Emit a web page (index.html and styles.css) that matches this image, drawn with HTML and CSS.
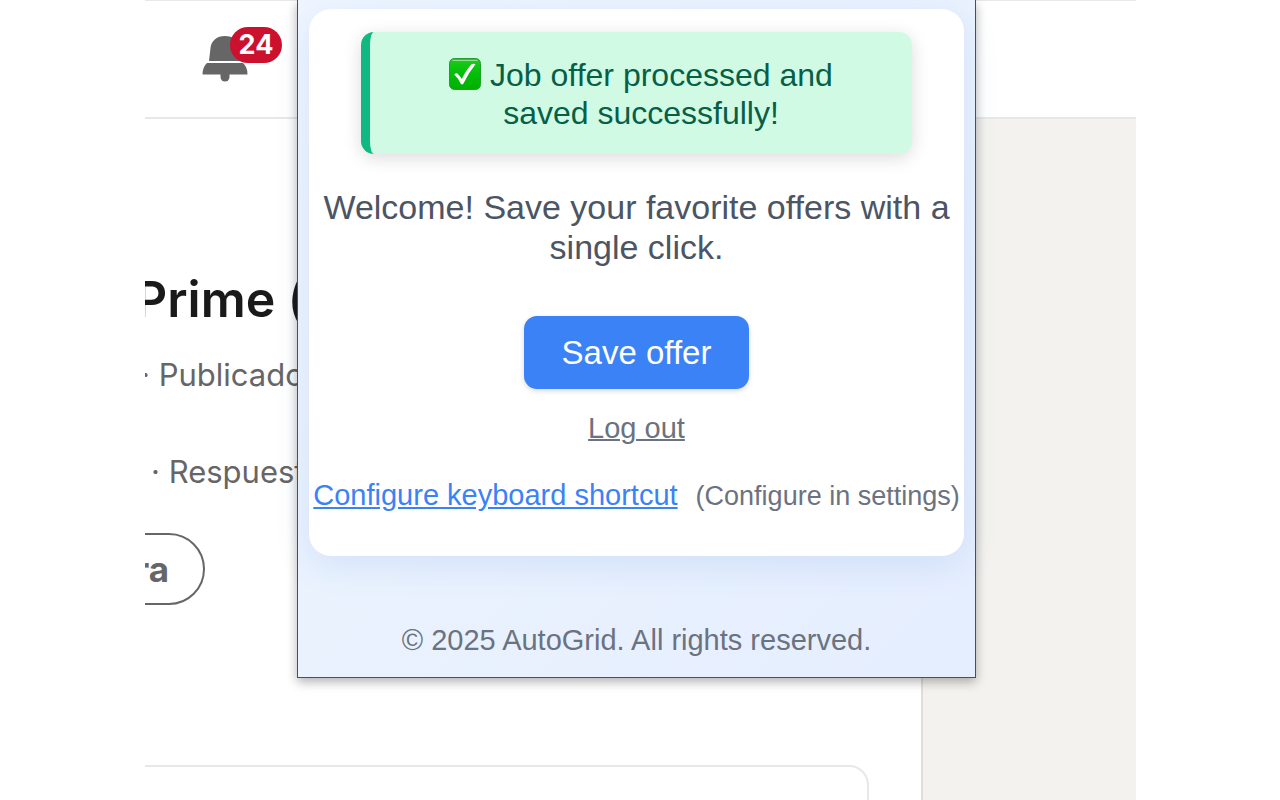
FILE: index.html
```
<!DOCTYPE html>
<html lang="en">
<head>
    <meta charset="UTF-8">
    <meta name="viewport" content="width=device-width, initial-scale=1.0">
    <title>AutoGrid</title>
    <link rel="stylesheet" href="styles.css">
</head>
<body>
    <div class="stage">
        <header class="site-header">
            <a class="notifications" href="#" aria-label="Notifications">
                <svg class="bell" viewBox="0 0 46 46" fill="#666" aria-hidden="true">
                    <path d="M7 25 L8.500 12 C9.300 4.500 15 0 23 0 C31 0 36.500 4.500 37.500 12 L39 25 Z"/>
                    <path d="M5 27 H41 C44 30 45.500 33.500 45.500 38.500 H0.500 C0.500 33.500 2 30 5 27 Z"/>
                    <path d="M18.500 38 H27.500 V41 A4.500 4.500 0 0 1 18.500 41 Z"/>
                </svg>
                <span class="badge">24</span>
            </a>
        </header>

        <div class="site-body">
            <main class="job">
                <h1 class="job-title" lang="es">Prime (</h1>
                <p class="job-meta" lang="es">· Publicado</p>
                <p class="job-meta job-meta-reply" lang="es">· Respuesta</p>
                <button class="job-pill" type="button">ra</button>
                <div class="job-card"></div>
            </main>
            <aside class="sidebar"></aside>
        </div>

        <section class="popup">
            <div class="card">
                <div class="alert" role="status">
                    <svg class="check" viewBox="0 0 32 32" aria-hidden="true">
                        <defs>
                            <linearGradient id="check-bg" x1="0" y1="0" x2="0" y2="1">
                                <stop offset="0" stop-color="#3fb93f"/>
                                <stop offset="0.150" stop-color="#14c814"/>
                                <stop offset="0.550" stop-color="#00bd08"/>
                                <stop offset="1" stop-color="#00b000"/>
                            </linearGradient>
                        </defs>
                        <rect x="0.500" y="0.500" width="31" height="31" rx="5" fill="url(#check-bg)" stroke="#22a02c" stroke-width="1"/>
                        <path d="M4 2.500 H28" stroke="#8fe08f" stroke-width="1.200" stroke-linecap="round"/>
                        <path d="M5.300 16.500 Q7 14.500 8.500 15.500 Q10.500 17.500 12.800 21 Q17.500 11.500 22.300 6.500 Q24.500 5 26.500 6.200 Q19.500 14.500 14.500 25.500 Q13.300 27.300 11.800 25.800 Q9 20 5.300 16.500 Z" fill="#fff"/>
                    </svg>
                    Job offer processed and saved successfully!
                </div>
                <p class="message">Welcome! Save your favorite offers with a single click.</p>
                <button class="save" type="button">Save offer</button>
                <a class="logout" href="#">Log out</a>
                <div class="shortcut">
                    <a href="#">Configure keyboard shortcut</a>
                    <span>(Configure in settings)</span>
                </div>
            </div>
            <footer class="popup-footer">© 2025 AutoGrid. All rights reserved.</footer>
        </section>
    </div>
</body>
</html>
```
FILE: styles.css
```
:root {
    --ink: #1a1a1a;
    --muted: #666;
    --line: #e8e8e8;
    --grey: #6b7280;
    --blue: #3b82f6;
}

* {
    box-sizing: border-box;
    margin: 0;
    padding: 0;
}

body {
    background: #fff;
    font-family: "Liberation Sans", Arial, sans-serif;
}

.stage {
    position: relative;
    display: flex;
    flex-direction: column;
    height: 100vh;
    margin: 0 144px 0 145px;
    overflow: hidden;
    font-family: Inter, sans-serif;
}

/* page behind the popup */
.site-header {
    flex: none;
    padding: 26px 57px 36px;
    border-top: 1px solid var(--line);
    border-bottom: 2px solid var(--line);
}

.notifications {
    position: relative;
    display: block;
    width: 80px;
    height: 54px;
    padding-top: 9px;
    text-decoration: none;
}

.bell {
    display: block;
    width: 46px;
    height: 46px;
}

.badge {
    position: absolute;
    top: 0;
    right: 0;
    width: 52px;
    border-radius: 18px;
    background: #cb112d;
    color: #fff;
    font-size: 27px;
    font-weight: 700;
    line-height: 36px;
    text-align: center;
}

.site-body {
    flex: 1;
    display: flex;
    min-height: 0;
}

.job {
    flex: 1;
    min-width: 0;
    padding: 150px 52px 0 0;
    border-right: 2px solid #dfdeda;
}

.job-title {
    margin-left: -10px;
    color: var(--ink);
    font-size: 50px;
    font-weight: 600;
    line-height: 60px;
}

.job-meta {
    margin: 24px 0 0 -4px;
    color: var(--muted);
    font-size: 31px;
    line-height: 44px;
}

.job-meta-reply {
    margin-top: 53px;
    padding-left: 10px;
}

.job-pill {
    display: block;
    width: 100px;
    height: 72px;
    margin: 39px 0 0 -40px;
    padding-right: 34px;
    border: 2px solid var(--muted);
    border-radius: 36px;
    background: #fff;
    color: var(--muted);
    font-family: inherit;
    font-size: 35px;
    font-weight: 700;
    text-align: right;
}

.job-card {
    height: 200px;
    margin: 160px 0 0 -40px;
    border: 2px solid var(--line);
    border-radius: 20px;
}

.sidebar {
    width: 213px;
    background: #f3f2ee;
}

/* extension popup */
.popup {
    position: absolute;
    top: 0;
    left: 152px;
    right: 160px;
    padding: 9px 11px 18px;
    border: 1px solid #4b5055;
    border-top: 0;
    background: linear-gradient(135deg, #eff6ff, #e5eefe);
    box-shadow: 0 4px 10px rgba(0, 0, 0, 0.3);
    font-family: "Liberation Sans", Arial, sans-serif;
    text-align: center;
}

.card {
    display: flex;
    flex-direction: column;
    align-items: center;
    padding: 23px 4px 41px;
    border-radius: 22px;
    background: #fff;
    box-shadow: 0 9px 36px rgba(40, 110, 200, 0.12);
}

.alert {
    align-self: stretch;
    margin: 0 48px;
    padding: 24px 40px 22px;
    border-left: 9px solid #10b981;
    border-radius: 13px;
    background: #d1fae5;
    box-shadow: 0 4px 18px rgba(0, 0, 0, 0.14);
    color: #065f46;
    font-size: 32px;
    line-height: 38px;
}

.check {
    width: 32px;
    height: 32px;
    vertical-align: -4px;
}

.message {
    margin-top: 33px;
    color: #4b5563;
    font-size: 34px;
    line-height: 40px;
}

.save {
    margin-top: 49px;
    padding: 0 38px;
    border: 0;
    border-radius: 13px;
    background: var(--blue);
    box-shadow: 0 2px 5px rgba(0, 0, 0, 0.15);
    color: #fff;
    font-family: inherit;
    font-size: 33px;
    line-height: 73px;
    cursor: pointer;
}

.save:hover {
    background: #2563eb;
}

.logout {
    margin-top: 20px;
    color: var(--grey);
    font-size: 29px;
    line-height: 38px;
    text-decoration-thickness: 2px;
}

.shortcut {
    display: flex;
    align-items: baseline;
    gap: 18px;
    margin-top: 29px;
    color: var(--grey);
    font-size: 27px;
    line-height: 38px;
    white-space: nowrap;
}

.shortcut a {
    color: var(--blue);
    font-size: 29px;
}

.popup-footer {
    margin-top: 65px;
    color: var(--grey);
    font-size: 29px;
    line-height: 38px;
}
```
